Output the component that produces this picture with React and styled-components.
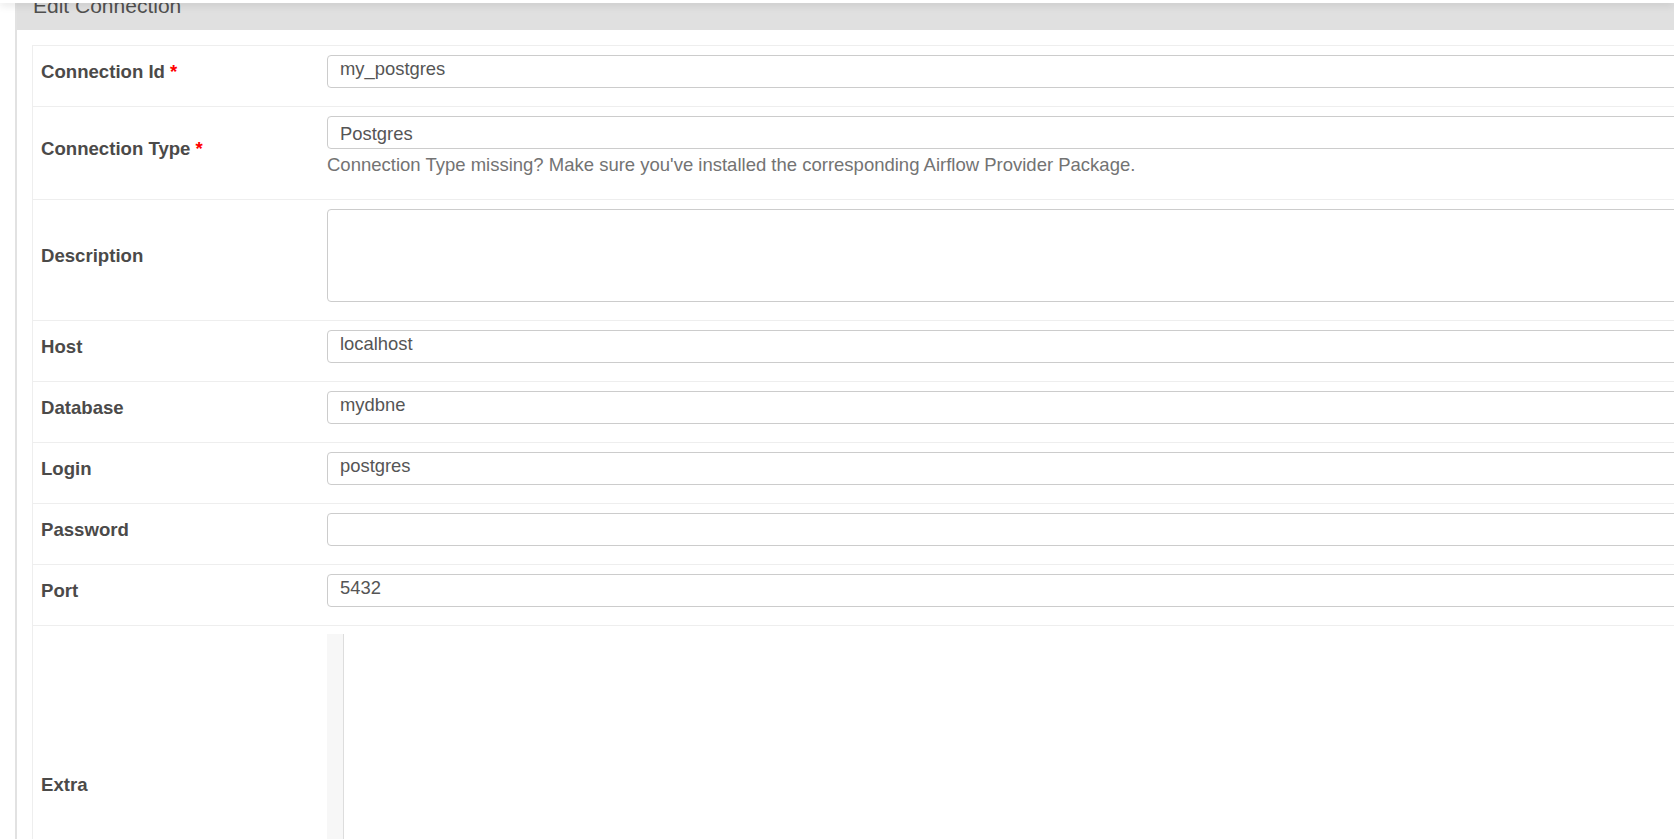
import React from 'react';
import styled, { createGlobalStyle } from 'styled-components';

// STYLE
const GlobalStyle = createGlobalStyle`
  html, body {
    margin: 0;
    padding: 0;
    background: #fff;
    overflow: hidden;
  }
  body {
    font-family: "Liberation Sans", Arial, Helvetica, sans-serif;
    color: #51504f;
  }
`;

const TopBar = styled.div`
  position: fixed;
  top: 0;
  left: 0;
  right: 0;
  height: 3px;
  background: #fff;
  box-shadow: 0 1px 8px rgba(0, 0, 0, 0.22);
  z-index: 10;
`;

const Page = styled.div`
  width: 1800px;
  margin-top: -16px;
  padding-left: 15px;
`;

const Panel = styled.div`
  border-left: 2px solid #e2e2e2;
  background: #fff;
`;

const PanelHeading = styled.div`
  background: #e0e0e0;
  padding: 10px 16px 12px;
  font-size: 21px;
  line-height: 24px;
  color: #51504f;
`;

const PanelBody = styled.div`
  padding: 15px;
`;

const FormTable = styled.div`
  border-top: 1px solid #eee;
  border-left: 1px solid #eee;
`;

const Row = styled.div`
  display: grid;
  grid-template-columns: 286px 1fr;
  border-bottom: 1px solid #eee;
`;

const LabelCell = styled.div`
  display: flex;
  align-items: center;
  padding: 9px 8px 18px;
  font-size: 18.6px;
  font-weight: bold;
  color: #4b4a49;
`;

const Required = styled.span`
  color: #f00;
  margin-left: 5px;
`;

const FieldCell = styled.div`
  padding: ${p => (p.$editor ? '8px' : '9px')} 8px 18px;
`;

const Input = styled.div`
  box-sizing: border-box;
  height: 33px;
  padding: ${p => (p.$select ? '7px 12px 4px' : '3px 12px 8px')};
  border: 1px solid #ccc;
  border-radius: 4px;
  font-size: 18.4px;
  line-height: 20px;
  color: #555;
`;

const TextArea = styled(Input)`
  height: 93px;
`;

const HelpText = styled.p`
  margin: 5px 0;
  font-size: 18.5px;
  line-height: 22px;
  color: #737373;
`;

const Editor = styled.div`
  display: flex;
  height: 300px;
  background: #fff;
`;

const Gutter = styled.div`
  width: 16px;
  background: #f7f7f7;
  border-right: 1px solid #ddd;
`;

const fields = [
  { label: 'Connection Id', value: 'my_postgres', required: true },
  {
    label: 'Connection Type',
    value: 'Postgres',
    required: true,
    select: true,
    help: "Connection Type missing? Make sure you've installed the corresponding Airflow Provider Package."
  },
  { label: 'Description', kind: 'textarea' },
  { label: 'Host', value: 'localhost' },
  { label: 'Database', value: 'mydbne' },
  { label: 'Login', value: 'postgres' },
  { label: 'Password', value: '' },
  { label: 'Port', value: '5432' },
  { label: 'Extra', kind: 'editor' }
];

const App = () => {
  return (
    <>
      <GlobalStyle />
      <TopBar />
      <Page>
        <Panel>
          <PanelHeading>Edit Connection</PanelHeading>
          <PanelBody>
            <FormTable>
              {fields.map(f => (
                <Row key={f.label}>
                  <LabelCell>
                    {f.label}
                    {f.required && <Required>*</Required>}
                  </LabelCell>
                  <FieldCell $editor={f.kind === 'editor'}>
                    {f.kind === 'textarea' && <TextArea />}
                    {f.kind === 'editor' && (
                      <Editor>
                        <Gutter />
                      </Editor>
                    )}
                    {!f.kind && <Input $select={f.select}>{f.value}</Input>}
                    {f.help && <HelpText>{f.help}</HelpText>}
                  </FieldCell>
                </Row>
              ))}
            </FormTable>
          </PanelBody>
        </Panel>
      </Page>
    </>
  );
};

export default App;
